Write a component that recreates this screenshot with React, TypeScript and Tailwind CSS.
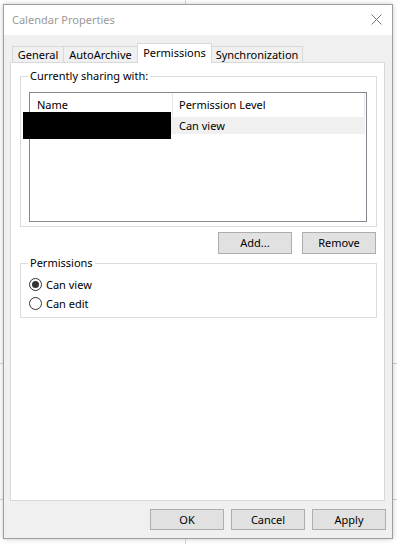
import { useState } from 'react';

type TabProps = {
  label: string;
  width: string;
  active?: boolean;
  first?: boolean;
};

const Tab = ({ label, width, active, first }: TabProps) => (
  <div
    className={`${width} ${first ? '' : '-ml-px'} flex items-center justify-center border-x border-t border-[#d9d9d9] ${
      active ? 'relative z-10 -mb-px h-[20px] bg-white pb-[1px]' : 'h-[16px] bg-[#f0f0f0]'
    }`}
  >
    {label}
  </div>
);

const Button = ({ label, width = 'w-[74px]', height = 'h-[22px]' }: { label: string; width?: string; height?: string }) => (
  <div className={`${width} ${height} flex items-center justify-center border border-[#adadad] bg-[#e1e1e1]`}>
    {label}
  </div>
);

const Radio = ({ label, checked, onClick }: { label: string; checked: boolean; onClick: () => void }) => (
  <div className="flex h-[19px] cursor-default items-center" onClick={onClick}>
    <div className="flex h-[13px] w-[13px] items-center justify-center rounded-full border border-[#333333] bg-white">
      {checked && <div className="h-[7px] w-[7px] rounded-full bg-[#333333]" />}
    </div>
    <span className="ml-[4px]">{label}</span>
  </div>
);

const App = () => {
  const [permission, setPermission] = useState<'view' | 'edit'>('view');

  return (
    <div className="relative h-[544px] w-[397px] overflow-hidden bg-white font-['Noto_Sans',sans-serif] text-[11px] leading-[16px] text-black">
      {/* app behind the dialog */}
      <div className="absolute left-[185px] top-0 h-full w-px bg-[#d4d4d4]" />
      <div className="absolute left-0 top-[363px] h-px w-full bg-[#d4d4d4]" />
      <div className="absolute left-0 top-[499px] h-px w-full bg-[#d4d4d4]" />

      <div className="relative ml-[3px] mt-[4px] flex h-[535px] w-[390px] flex-col border border-[#9e9e9e] bg-[#f0f0f0] shadow-[0_0_5px_rgba(0,0,0,0.22)]">
        {/* title bar */}
        <div className="flex h-[30px] items-start justify-between bg-white">
          <span className="ml-[8px] mt-[7px] text-[#999999]">Calendar Properties</span>
          <svg className="mr-[10px] mt-[9px]" width="11" height="11" viewBox="0 0 11 11">
            <path d="M0.5 0.5 L10.5 10.5 M10.5 0.5 L0.5 10.5" stroke="#777777" strokeWidth="1" fill="none" />
          </svg>
        </div>

        {/* tabs */}
        <div className="ml-[8px] mt-[8px] flex h-[19px] items-end">
          <Tab label="General" width="w-[52px]" first />
          <Tab label="AutoArchive" width="w-[75px]" />
          <Tab label="Permissions" width="w-[75px]" active />
          <Tab label="Synchronization" width="w-[92px]" />
        </div>

        {/* tab panel */}
        <div className="ml-[6px] flex h-[439px] w-[375px] flex-col border border-[#d9d9d9] bg-white pl-[9px] pr-[7px] pt-[5px]">
          <fieldset className="w-full border border-[#dcdcdc]">
            <legend className="ml-[7px] px-[2px]">Currently sharing with:</legend>
            <div className="pb-[4px] pl-[8px] pt-[8px]">
              <div className="relative h-[130px] w-[338px] border border-[#828790] bg-white">
                <div className="flex h-[24px]">
                  <div className="flex w-[143px] items-center border-r border-[#e5e5e5] pl-[7px]">Name</div>
                  <div className="flex w-[192px] items-center border-r border-[#e5e5e5] pl-[6px]">Permission Level</div>
                </div>
                <div className="flex h-[17px] w-[335px] items-center bg-[#f0f0f0]">
                  <span className="ml-[149px]">Can view</span>
                </div>
                {/* redacted name */}
                <div className="absolute left-[-7px] top-[19px] h-[27px] w-[148px] bg-black" />
              </div>
            </div>
          </fieldset>

          <div className="mr-[1px] mt-[5px] flex justify-end gap-[10px]">
            <Button label="Add..." />
            <Button label="Remove" />
          </div>

          <fieldset className="mt-[1px] w-full border border-[#dcdcdc]">
            <legend className="ml-[7px] px-[2px]">Permissions</legend>
            <div className="pb-[4px] pl-[8px] pt-[4px]">
              <Radio label="Can view" checked={permission === 'view'} onClick={() => setPermission('view')} />
              <Radio label="Can edit" checked={permission === 'edit'} onClick={() => setPermission('edit')} />
            </div>
          </fieldset>
        </div>

        {/* dialog buttons */}
        <div className="mr-[6px] mt-[8px] flex justify-end gap-[7px]">
          <Button label="OK" height="h-[21px]" />
          <Button label="Cancel" height="h-[21px]" />
          <Button label="Apply" height="h-[21px]" />
        </div>
      </div>
    </div>
  );
};

export default App;
